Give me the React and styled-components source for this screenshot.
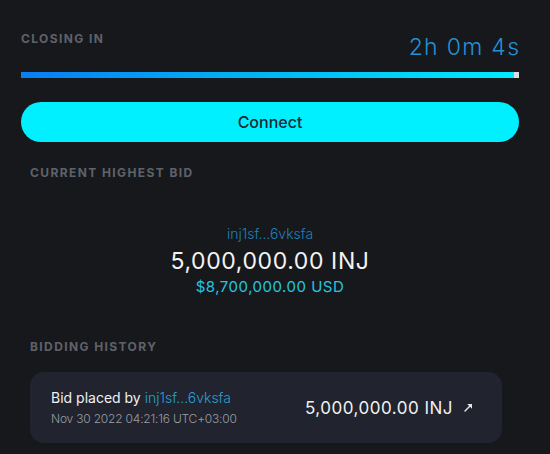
import React from 'react';
import styled, { createGlobalStyle } from 'styled-components';

const GlobalStyle = createGlobalStyle`
  body {
    margin: 0;
    background: #17181c;
    font-family: Inter, "Open Sans", sans-serif;
  }
`;

const Page = styled.div`
  width: 550px;
  height: 454px;
  box-sizing: border-box;
  padding: 31px 31px 0 21px;
  background: #17181c;
  overflow: hidden;
`;

const Header = styled.div`
  display: flex;
  justify-content: space-between;
  align-items: flex-start;
`;

const Label = styled.div`
  font-size: 12px;
  line-height: 16px;
  font-weight: 700;
  letter-spacing: 1.4px;
  color: #5f626a;
  text-transform: uppercase;
`;

const Timer = styled.div`
  margin-top: 3px;
  margin-right: -1.3px;
  font-size: 23px;
  line-height: 27px;
  font-weight: 300;
  letter-spacing: 1.3px;
  color: #2191d3;
`;

const Progress = styled.div`
  margin-top: 11px;
  height: 6px;
  display: flex;
  background: #dcdcdc;
`;

const ProgressFill = styled.div`
  height: 100%;
  background: linear-gradient(90deg, #0a7ef2 0%, #00b8f5 50%, #00eaff 100%);
`;

const ConnectButton = styled.button`
  margin-top: 24px;
  width: 100%;
  height: 40px;
  border: none;
  border-radius: 20px;
  background: #00f0ff;
  color: #1b2734;
  font-family: inherit;
  font-size: 16px;
  font-weight: 500;
  cursor: pointer;
`;

const Section = styled.section`
  padding-left: 9px;
  margin-top: ${({ top }) => top}px;
`;

const Highest = styled.div`
  margin-top: 44px;
  display: flex;
  flex-direction: column;
  align-items: center;
  padding-right: 9px;
`;

const Address = styled.span`
  color: ${({ light }) => (light ? '#2a9fd0' : '#1f80b5')};
  font-weight: 300;
`;

const HighAddress = styled.div`
  font-size: 14px;
  line-height: 18px;
`;

const BigAmount = styled.div`
  margin-top: 4px;
  font-size: 23px;
  line-height: 28px;
  letter-spacing: 0.6px;
  color: #f3f3f3;
  font-weight: 400;
`;

const Usd = styled.div`
  margin-top: 2px;
  font-size: 15px;
  line-height: 19px;
  letter-spacing: 0.5px;
  color: #24c7e0;
`;

const BidCard = styled.div`
  margin-top: 17px;
  width: 472px;
  height: 71px;
  box-sizing: border-box;
  padding: 0 29px 0 21px;
  border-radius: 14px;
  background: #21242e;
  display: flex;
  align-items: center;
  justify-content: space-between;
`;

const BidInfo = styled.div`
  display: flex;
  flex-direction: column;
  gap: 3px;
`;

const BidBy = styled.div`
  font-size: 14px;
  line-height: 20px;
  color: #f1f1f1;
`;

const BidDate = styled.div`
  font-size: 12px;
  line-height: 16px;
  letter-spacing: -0.2px;
  color: #9a9da5;
  font-weight: 300;
`;

const BidAmount = styled.div`
  display: flex;
  align-items: center;
  gap: 11px;
  font-size: 17px;
  letter-spacing: 0.5px;
  color: #f1f1f1;
`;

const ArrowIcon = () => (
  <svg width="9" height="9" viewBox="0 0 9 9" fill="none">
    <path d="M1 8 L7 2" stroke="#e6e6e6" strokeWidth="1.4" strokeLinecap="round" />
    <path d="M3.2 1 H8 V5.8 Z" fill="#e6e6e6" />
  </svg>
);

export default function App() {
  return (
    <Page>
      <GlobalStyle />
      <Header>
        <Label>Closing in</Label>
        <Timer>2h 0m 4s</Timer>
      </Header>
      <Progress>
        <ProgressFill style={{ width: `${(493 / 498) * 100}%` }} />
      </Progress>
      <ConnectButton>Connect</ConnectButton>

      <Section top={23}>
        <Label>Current highest bid</Label>
        <Highest>
          <HighAddress><Address>inj1sf...6vksfa</Address></HighAddress>
          <BigAmount>5,000,000.00 INJ</BigAmount>
          <Usd>$8,700,000.00 USD</Usd>
        </Highest>
      </Section>

      <Section top={43}>
        <Label>Bidding history</Label>
        <BidCard>
          <BidInfo>
            <BidBy>Bid placed by <Address light>inj1sf...6vksfa</Address></BidBy>
            <BidDate>Nov 30 2022 04:21:16 UTC+03:00</BidDate>
          </BidInfo>
          <BidAmount>
            5,000,000.00 INJ
            <ArrowIcon />
          </BidAmount>
        </BidCard>
      </Section>
    </Page>
  );
}
